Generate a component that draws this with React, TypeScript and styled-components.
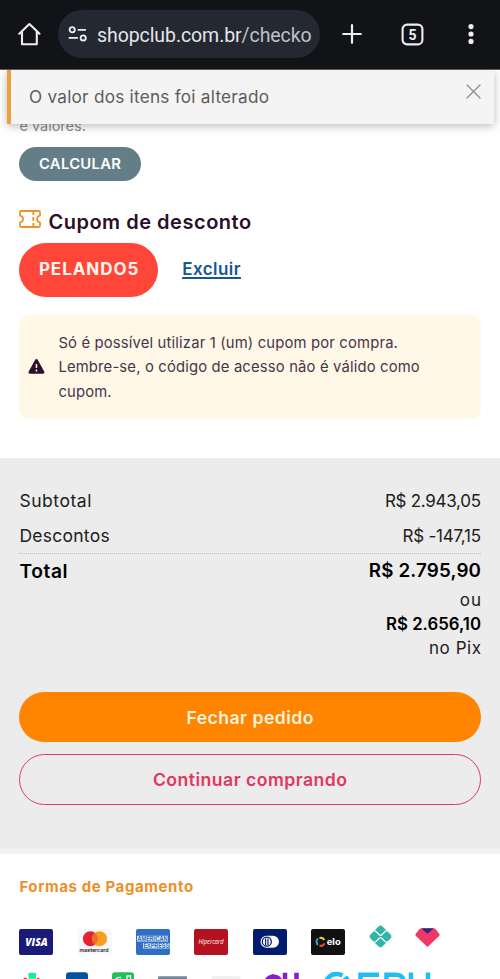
import React from "react";
import styled, { createGlobalStyle } from "styled-components";

const GlobalStyle = createGlobalStyle`
  *, *::before, *::after { box-sizing: border-box; }
  html, body { margin: 0; background: #fff; overflow: hidden; }
  body { font-family: Inter, "Liberation Sans", sans-serif; color: #161616; }
  button { font-family: inherit; cursor: pointer; }
`;

const Screen = styled.div`
  position: relative;
  display: flex;
  flex-direction: column;
  width: 500px;
  height: 979px;
  overflow: hidden;
  background: #fff;
`;

/* Browser chrome */
const BrowserBar = styled.header`
  display: flex;
  align-items: flex-start;
  flex: none;
  height: 69.5px;
  padding: 10px 19px 0 18px;
  background: #121317;
  border-bottom: 1.5px solid #5a5b60;
`;

const BarIcon = styled.button<{ $gap: number }>`
  display: flex;
  align-items: center;
  justify-content: center;
  flex: none;
  height: 48px;
  padding: 0;
  margin-left: ${(p) => p.$gap}px;
  border: 0;
  background: none;
`;

const AddressBar = styled.div`
  display: flex;
  align-items: center;
  flex: none;
  width: 262px;
  height: 48px;
  margin-left: 17px;
  padding: 0 8px 0 10px;
  border-radius: 24px;
  background: #242831;
`;

const Address = styled.div`
  flex: 1;
  margin-left: 10px;
  padding-top: 3px;
  white-space: nowrap;
  font: 400 19.5px/28px Roboto, sans-serif;
  letter-spacing: -0.08px;
  color: #e3e4ea;
`;

const AddressPath = styled.span`
  color: #bfc1c9;
`;

/* Toast over the page */
const Toast = styled.div`
  position: absolute;
  top: 70px;
  left: 7px;
  display: flex;
  justify-content: space-between;
  width: 486.5px;
  height: 54px;
  padding: 12px 12.5px 0 18px;
  border-left: 4px solid #e8a23e;
  background: #f4f4f4;
  box-shadow: 0 2px 9px rgba(0, 0, 0, 0.28);
  clip-path: inset(0 -14px -20px -14px);
`;

const ToastText = styled.p`
  margin: 0;
  font-size: 17.2px;
  line-height: 30px;
  letter-spacing: 0.24px;
  color: #5c5c5c;
`;

const CloseButton = styled.button`
  width: 15px;
  height: 15px;
  margin-top: 1.5px;
  padding: 0;
  border: 0;
  background: none;
  line-height: 0;
`;

/* Coupon section */
const CouponSection = styled.section`
  flex: none;
  height: 388.5px;
  padding: 46px 19px 0 19.4px;
`;

const ShippingHint = styled.p`
  margin: 0;
  font-size: 14.5px;
  line-height: 20px;
  color: #868f93;
`;

const CalculateButton = styled.button`
  display: block;
  width: 121.5px;
  height: 34px;
  margin-top: 11px;
  padding: 0;
  border: 0;
  border-radius: 17px;
  background: #647e87;
  color: #fff;
  font-size: 14.8px;
  font-weight: 600;
  letter-spacing: 0.3px;
`;

const CouponTitle = styled.h2`
  display: flex;
  align-items: flex-start;
  gap: 7px;
  height: 32px;
  margin: 29.5px 0 0;
  font-size: 20px;
  font-weight: 600;
  line-height: 25px;
  letter-spacing: 0.52px;
  color: #2a0f2b;

  svg { flex: none; }
`;

const CouponRow = styled.div`
  display: flex;
  align-items: center;
  gap: 24.3px;
  margin-top: 1px;
`;

const CouponTag = styled.span`
  display: flex;
  align-items: center;
  justify-content: center;
  width: 138.5px;
  height: 53.5px;
  padding: 0 0 1px 1px;
  border-radius: 27px;
  background: #ff4639;
  color: #fff6f0;
  font-size: 17px;
  font-weight: 700;
  letter-spacing: 0.95px;
`;

const RemoveLink = styled.a`
  padding-bottom: 1px;
  color: #15578f;
  font-size: 17px;
  font-weight: 600;
  letter-spacing: 0.45px;
  text-decoration: underline;
  text-decoration-thickness: 1.5px;
  text-underline-offset: 2px;
`;

const Warning = styled.div`
  display: flex;
  align-items: center;
  gap: 13.5px;
  height: 104px;
  margin-top: 18px;
  padding-left: 8.5px;
  border-radius: 10px;
  background: #fff8e6;

  svg { flex: none; }
`;

const WarningText = styled.p`
  margin: 0;
  padding-top: 2px;
  font-size: 14.8px;
  line-height: 24.3px;
  letter-spacing: 0.17px;
  white-space: nowrap;
  color: #49334a;
`;

/* Order summary */
const Summary = styled.section`
  flex: none;
  height: 396px;
  padding: 26px 19px 0 19.4px;
  background: #ececec;
  border-bottom: 6px solid #f1f1f1;
`;

const SummaryRow = styled.div<{ $total?: boolean }>`
  display: flex;
  justify-content: space-between;
  height: ${(p) => (p.$total ? 33 : 34.5)}px;
  font-size: ${(p) => (p.$total ? 18.8 : 17)}px;
  font-weight: ${(p) => (p.$total ? 600 : 400)};
  line-height: ${(p) => (p.$total ? 34 : 34.5)}px;
  color: ${(p) => (p.$total ? "#000" : "#202020")};
`;

const Tracked = styled.span<{ $track: number; $size?: number }>`
  ${(p) => (p.$size ? `font-size: ${p.$size}px;` : "")}
  letter-spacing: ${(p) => p.$track}px;
  margin-right: ${(p) => -p.$track}px;
`;

const Divider = styled.hr`
  height: 0;
  margin: -0.5px 0 0;
  border: 0;
  border-top: 1.5px dotted #b9c0c2;
`;

const PixPrice = styled.div`
  display: flex;
  flex-direction: column;
  align-items: flex-end;
  margin-top: 1px;
  font-size: 17px;
  line-height: 24.3px;
  color: #202020;

  strong { font-size: 16.8px; font-weight: 600; color: #000; }
`;

const ActionButton = styled.button<{ $outlined?: boolean }>`
  display: block;
  width: 100%;
  height: ${(p) => (p.$outlined ? 51.5 : 49.5)}px;
  margin-top: ${(p) => (p.$outlined ? 12 : 32)}px;
  padding: 0;
  border: ${(p) => (p.$outlined ? "1.3px solid #de3c67" : "0")};
  border-radius: 26px;
  background: ${(p) => (p.$outlined ? "transparent" : "#ff8400")};
  color: ${(p) => (p.$outlined ? "#e13661" : "#fff3dd")};
  font-size: 17.6px;
  font-weight: 600;
  letter-spacing: 0.48px;
`;

/* Payment methods */
const Payments = styled.section`
  flex: 1;
  padding: 20.5px 19.4px 0;
`;

const PaymentsTitle = styled.h3`
  margin: 0;
  font-size: 15px;
  font-weight: 700;
  line-height: 24px;
  letter-spacing: 0.6px;
  color: #ec9029;
`;

const BrandRow = styled.div`
  display: flex;
  align-items: flex-start;
  gap: 24.3px;
  margin-top: 30.5px;
  line-height: 0;
`;

const BrandCard = styled.div<{ $bg: string }>`
  display: flex;
  flex: none;
  width: 34px;
  height: 25.5px;
  border-radius: 2px;
  background: ${(p) => p.$bg};
`;

const BareBrand = styled.div<{ $shift: number; $lift: number }>`
  flex: none;
  margin: ${(p) => p.$lift}px 0 0 ${(p) => p.$shift}px;
`;

const ClippedBrands = styled.div`
  margin: 17px 0 0 -19.5px;
  line-height: 0;
`;

const HomeIcon = () => (
  <svg width="23" height="24" viewBox="0 0 23 24" fill="none" stroke="#eeedf5" strokeWidth="2.1" strokeLinejoin="round" strokeLinecap="round">
    <path d="M1.3 11.7 11.4 2l10.1 9.700M4 10v12.200h14.800V10" />
  </svg>
);

const TuneIcon = () => (
  <svg width="19" height="16" viewBox="0 0 19 16" fill="none" stroke="#eeedf5" strokeWidth="1.8">
    <circle cx="4.2" cy="3.8" r="2.6" />
    <circle cx="15.2" cy="11.9" r="2.6" />
    <path d="M9.7 3.8h8.2M.7 11.9h9.2" />
  </svg>
);

const TicketIcon = () => (
  <svg width="22" height="18" viewBox="0 0 22 18" fill="none" stroke="#ea962f" strokeWidth="1.8" strokeLinejoin="round">
    <path d="M1 2.2Q1 1 2.2 1h17.6Q21 1 21 2.2v3.4q-3 .5-3 3.4t3 3.4v3.4q0 1.2-1.2 1.2H2.2Q1 17 1 15.8v-3.4Q4 12 4 9T1 5.6Z" />
    <path d="M14.3 1v4M14.3 7v4M14.3 13v4" />
  </svg>
);

const WarningIcon = () => (
  <svg width="17" height="15" viewBox="0 0 17 15">
    <path d="M7.2.8a1.45 1.45 0 0 1 2.5 0l6.5 11.7a1.5 1.5 0 0 1-1.3 2.3H2a1.5 1.5 0 0 1-1.3-2.3Z" fill="#2b102c" />
    <path d="M8.45 5v4M8.45 10.6v1.8" stroke="#fff8e6" strokeWidth="1.5" />
  </svg>
);

const Visa = () => (
  <svg width="34" height="25.5" viewBox="0 0 34 25.5">
    <text x="6.3" y="16.5" textLength="22.5" lengthAdjust="spacingAndGlyphs" fill="#fff" fontFamily="Open Sans" fontSize="11" fontStyle="italic" fontWeight="800">VISA</text>
  </svg>
);

const Mastercard = () => (
  <svg width="34" height="25.5" viewBox="0 0 34 25.5">
    <circle cx="12.4" cy="9.8" r="7.5" fill="#e52330" />
    <circle cx="21.6" cy="9.8" r="7.5" fill="#f99f20" />
    <path d="M17 3.9a7.5 7.5 0 0 1 0 11.8a7.5 7.5 0 0 1 0-11.8" fill="#f36b22" />
    <text x="1.5" y="22.6" textLength="29" lengthAdjust="spacingAndGlyphs" fill="#202020" fontFamily="Inter" fontSize="5.2" fontWeight="600">mastercard</text>
  </svg>
);

const Amex = () => (
  <svg width="34" height="25.5" viewBox="0 0 34 25.5">
    <path d="M1 6.8h31v5.6H1ZM7 14h26.5v5.4H7Z" fill="#fff" opacity=".85" />
    <g fontFamily="Liberation Sans" fontSize="6.5" fontWeight="700" fill="#2f6ec0">
      <text x="1.5" y="12" textLength="30" lengthAdjust="spacingAndGlyphs">AMERICAN</text>
      <text x="7.5" y="19.1" textLength="25.5" lengthAdjust="spacingAndGlyphs">EXPRESS</text>
    </g>
  </svg>
);

const Hipercard = () => (
  <svg width="34" height="25.5" viewBox="0 0 34 25.5">
    <text x="4.5" y="14.7" textLength="25" lengthAdjust="spacingAndGlyphs" fill="#fff" fontFamily="Open Sans" fontSize="6.2" fontStyle="italic">Hipercard</text>
  </svg>
);

const Diners = () => (
  <svg width="34" height="25.5" viewBox="0 0 34 25.5">
    <path d="M13.5 6.7H20a6 6 0 0 1 0 12h-6.5a6 6 0 0 1 0-12" fill="#fff" />
    <circle cx="13.8" cy="12.7" r="4.5" fill="none" stroke="#001b70" strokeWidth="1.3" />
    <path d="M12.6 9.5v6.4M15 9.5v6.4" stroke="#001b70" strokeWidth="1.2" />
  </svg>
);

const Elo = () => (
  <svg width="34" height="25.5" viewBox="0 0 34 25.5">
    <g fill="none" strokeWidth="2">
      <path d="M8.5 9a4 4 0 0 1 4.8 2" stroke="#ffd22a" />
      <path d="M13.4 14.4a4 4 0 0 1-4.9 2.2" stroke="#ef4934" />
      <path d="M7 9.6a4.2 4.2 0 0 0 0 6.4" stroke="#20a8e3" />
    </g>
    <text x="15.7" y="16.1" textLength="14" lengthAdjust="spacingAndGlyphs" fill="#fff" fontFamily="Inter" fontSize="8.8" fontWeight="700">elo</text>
  </svg>
);

const Pix = () => (
  <svg width="23" height="23" viewBox="0 0 23 23">
    <path d="M9.3 1.7Q11.5-.5 13.7 1.7L21.3 9.3Q23.5 11.5 21.3 13.7L13.7 21.3Q11.5 23.5 9.3 21.3L1.7 13.7Q-.5 11.5 1.7 9.3Z" fill="#32b5a7" />
    <path d="M4.5 6H6.5L10.5 10Q11.5 11 12.5 10L16.5 6H18.5M4.5 17H6.5L10.5 13Q11.5 12 12.5 13L16.5 17H18.5" fill="none" stroke="#fff" strokeWidth="1.1" />
  </svg>
);

const Gem = () => (
  <svg width="25" height="19" viewBox="0 0 25 19">
    <path d="M5 .6h15L24.4 6q.6.9-.1 1.7L13.6 18q-1.1 1-2.2 0L.7 7.7Q0 6.9.6 6Z" fill="#ef3865" />
    <path d="M6.2.3h12.6L13.5 5q-1 .9-2 0Z" fill="#382275" />
  </svg>
);

const CutOffLogos = () => (
  <svg width="480" height="40" viewBox="0 0 480 40">
    <rect x="28.5" y=".8" width="7.5" height="6" rx="1" fill="#15f18f" />
    <path d="M23 7l2-1.4 3 1.4ZM36 7l2-1.4 2 1.4Z" fill="#e92e55" />
    <rect x="66" y="0.3" width="22" height="22" rx="3" fill="#04539c" />
    <rect x="112" y="0.3" width="22" height="22" rx="3" fill="#23bd5c" />
    <path d="M116 7q1-2 5-1.5M127 8V4h3.5v4" fill="none" stroke="#fff" strokeWidth="1.3" />
    <rect x="158" y="4.2" width="29" height="20" rx="1" fill="#788699" />
    <rect x="211.500" y="4.2" width="29" height="20" rx="2" fill="#eeeeef" />
    <path d="M266.5 9a8 8 0 0 1 14 0M285 .8V10M296.5 .8V10" fill="none" stroke="#8420c5" strokeWidth="4.5" />
    <path d="M268 8a7 7 0 0 1 6-6v6Z" fill="#8420c5" />
    <g fill="none" stroke="#20c0ee" strokeWidth="4.5">
      <path d="M326.5 8q6-9 16-4.5M344 8.5l4.5-3.3M360.5 12V2.7H379M386.5 12V2.7H396q6 0 7.5 5M411 .5V12M428 .5V12" />
    </g>
  </svg>
);

export default function App() {
  return (
    <Screen>
      <GlobalStyle />
      <BrowserBar>
        <BarIcon $gap={0} aria-label="Início"><HomeIcon /></BarIcon>
        <AddressBar>
          <TuneIcon />
          <Address>shopclub.com.br<AddressPath>/checko</AddressPath></Address>
        </AddressBar>
        <BarIcon $gap={22} aria-label="Nova guia">
          <svg width="20" height="20" viewBox="0 0 20 20" stroke="#eeedf5" strokeWidth="2.2" strokeLinecap="round"><path d="M10 1.2v17.6M1.2 10h17.6" /></svg>
        </BarIcon>
        <BarIcon $gap={39} aria-label="Guias">
          <svg width="23" height="23" viewBox="0 0 23 23">
            <rect x="1.6" y="1.6" width="19.8" height="19.8" rx="4.5" fill="none" stroke="#eeedf5" strokeWidth="2.1" />
            <text x="11.5" y="16.5" textAnchor="middle" fill="#eeedf5" fontFamily="Roboto" fontWeight="700" fontSize="14">5</text>
          </svg>
        </BarIcon>
        <BarIcon $gap={44} aria-label="Menu">
          <svg width="6" height="22" viewBox="0 0 6 22" fill="#eeedf5"><circle cx="3" cy="3.6" r="2.6" /><circle cx="3" cy="11" r="2.6" /><circle cx="3" cy="18.4" r="2.6" /></svg>
        </BarIcon>
      </BrowserBar>

      <CouponSection>
        <ShippingHint>e valores.</ShippingHint>
        <CalculateButton>CALCULAR</CalculateButton>
        <CouponTitle><TicketIcon />Cupom de desconto</CouponTitle>
        <CouponRow>
          <CouponTag>PELANDO5</CouponTag>
          <RemoveLink href="#">Excluir</RemoveLink>
        </CouponRow>
        <Warning>
          <WarningIcon />
          <WarningText>
            Só é possível utilizar 1 (um) cupom por compra.<br />
            Lembre-se, o código de acesso não é válido como<br />
            cupom.
          </WarningText>
        </Warning>
      </CouponSection>

      <Summary>
        <SummaryRow><Tracked $size={17.5} $track={0.55}>Subtotal</Tracked><Tracked $track={-0.29}>R$ 2.943,05</Tracked></SummaryRow>
        <SummaryRow><Tracked $size={17.5} $track={0.26}>Descontos</Tracked><Tracked $track={-0.22}>R$ -147,15</Tracked></SummaryRow>
        <Divider />
        <SummaryRow $total><Tracked $size={19.2} $track={0.6}>Total</Tracked><Tracked $track={0.15}>R$ 2.795,90</Tracked></SummaryRow>
        <PixPrice>
          <Tracked $track={1}>ou</Tracked>
          <strong>R$ 2.656,10</strong>
          <Tracked $track={0.55}>no Pix</Tracked>
        </PixPrice>
        <ActionButton>Fechar pedido</ActionButton>
        <ActionButton $outlined>Continuar comprando</ActionButton>
      </Summary>

      <Payments>
        <PaymentsTitle>Formas de Pagamento</PaymentsTitle>
        <BrandRow>
          <BrandCard $bg="#1a1a78"><Visa /></BrandCard>
          <BrandCard $bg="#f8f8f8"><Mastercard /></BrandCard>
          <BrandCard $bg="#2f6ec5"><Amex /></BrandCard>
          <BrandCard $bg="#b51220"><Hipercard /></BrandCard>
          <BrandCard $bg="#001b70"><Diners /></BrandCard>
          <BrandCard $bg="#111"><Elo /></BrandCard>
          <BareBrand $shift={0} $lift={-4}><Pix /></BareBrand>
          <BareBrand $shift={-1} $lift={-1}><Gem /></BareBrand>
        </BrandRow>
        <ClippedBrands><CutOffLogos /></ClippedBrands>
      </Payments>

      <Toast role="status">
        <ToastText>O valor dos itens foi alterado</ToastText>
        <CloseButton aria-label="Fechar">
          <svg width="15" height="15" viewBox="0 0 15 15" stroke="#8c8c8c" strokeWidth="1.3" strokeLinecap="round"><path d="m1 1 13 13M14 1 1 14" /></svg>
        </CloseButton>
      </Toast>
    </Screen>
  );
}
